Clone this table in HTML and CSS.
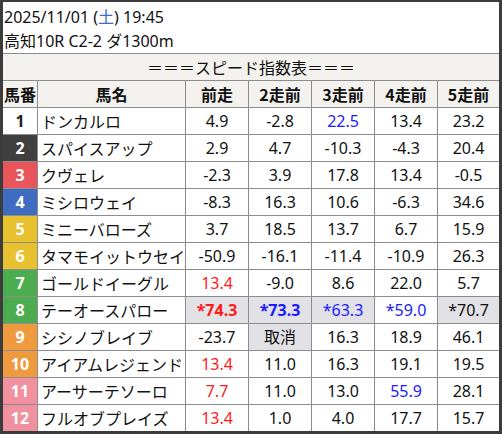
FILE: index.html
```html
<!DOCTYPE html>
<html lang="ja">
<head>
<meta charset="utf-8">
<link rel="stylesheet" href="styles.css">
</head>
<body>
<div class="frame">
  <div class="info">
    <div>2025/11/01 (<span class="sat">土</span>) 19:45</div>
    <div>高知10R C2-2 ダ1300m</div>
  </div>
  <div class="title">＝＝＝スピード指数表＝＝＝</div>
  <table class="grid">
    <colgroup>
      <col class="c-no"><col class="c-name"><col class="c-v"><col class="c-v"><col class="c-v"><col class="c-v"><col class="c-v5">
    </colgroup>
    <thead>
      <tr><th>馬番</th><th>馬名</th><th>前走</th><th>2走前</th><th>3走前</th><th>4走前</th><th>5走前</th></tr>
    </thead>
    <tbody>
      <tr><td class="no w1">1</td><td class="name">ドンカルロ</td><td>4.9</td><td>-2.8</td><td class="blue">22.5</td><td>13.4</td><td>23.2</td></tr>
      <tr><td class="no w2">2</td><td class="name">スパイスアップ</td><td>2.9</td><td>4.7</td><td>-10.3</td><td>-4.3</td><td>20.4</td></tr>
      <tr><td class="no w3">3</td><td class="name">クヴェレ</td><td>-2.3</td><td>3.9</td><td>17.8</td><td>13.4</td><td>-0.5</td></tr>
      <tr><td class="no w4">4</td><td class="name">ミシロウェイ</td><td>-8.3</td><td>16.3</td><td>10.6</td><td>-6.3</td><td>34.6</td></tr>
      <tr><td class="no w5">5</td><td class="name">ミニーバローズ</td><td>3.7</td><td>18.5</td><td>13.7</td><td>6.7</td><td>15.9</td></tr>
      <tr><td class="no w5">6</td><td class="name">タマモイットウセイ</td><td>-50.9</td><td>-16.1</td><td>-11.4</td><td>-10.9</td><td>26.3</td></tr>
      <tr><td class="no w7">7</td><td class="name">ゴールドイーグル</td><td class="red">13.4</td><td>-9.0</td><td>8.6</td><td>22.0</td><td>5.7</td></tr>
      <tr><td class="no w7">8</td><td class="name">テーオースパロー</td><td class="hl red b">*74.3</td><td class="hl blue b">*73.3</td><td class="hl blue">*63.3</td><td class="blue">*59.0</td><td class="hl">*70.7</td></tr>
      <tr><td class="no w9">9</td><td class="name">シシノブレイブ</td><td>-23.7</td><td class="hl">取消</td><td>16.3</td><td>18.9</td><td>46.1</td></tr>
      <tr><td class="no w9">10</td><td class="name">アイアムレジェンド</td><td class="red">13.4</td><td>11.0</td><td>16.3</td><td>19.1</td><td>19.5</td></tr>
      <tr><td class="no w11">11</td><td class="name">アーサーテソーロ</td><td class="red">7.7</td><td>11.0</td><td>13.0</td><td class="blue">55.9</td><td>28.1</td></tr>
      <tr><td class="no w11">12</td><td class="name">フルオブプレイズ</td><td class="red">13.4</td><td>1.0</td><td>4.0</td><td>17.7</td><td>15.7</td></tr>
    </tbody>
  </table>
</div>
</body>
</html>
```
FILE: styles.css
```css
* { box-sizing: border-box; }
html, body { margin: 0; padding: 0; background: #fff; }
body {
  font-family: "Noto Sans", "Noto Sans CJK JP", sans-serif;
  font-size: 16px;
  color: #111;
}
.frame {
  width: 502px;
  height: 434px;
  border-style: solid;
  border-color: #3c3c3c;
  border-width: 2px 3px 3px 3px;
  overflow: hidden;
  background: #fff;
}
.info {
  padding: 3px 0 0 1px;
  height: 51px;
  line-height: 24px;
}
.sat { color: #3a6cc8; }
.title {
  height: 27px;
  line-height: 26px;
  border-top: 1px solid #8c8c8c;
  background: #f3f2ee;
  text-align: center;
  font-family: "Noto Sans CJK JP", sans-serif;
}
.grid {
  border-collapse: collapse;
  width: 497px;
  table-layout: fixed;
  margin-left: -1px;
}
.c-no { width: 35px; }
.c-name { width: 148px; }
.c-v { width: 63px; }
.c-v5 { width: 62px; }
.grid th, .grid td {
  border: 1px solid #8c8c8c;
  height: 27px;
  padding: 0;
  text-align: center;
  white-space: nowrap;
  line-height: 24px;
}
.grid th {
  background: #f3f2ee;
  font-weight: bold;
  font-family: "Noto Sans CJK JP", sans-serif;
}
.grid td.name {
  text-align: left;
  padding-left: 3px;
  font-family: "Noto Sans CJK JP", sans-serif;
  overflow: hidden;
}
.grid td.no { font-weight: bold; color: #fff; }
.w1 { background: #fff; color: #222 !important; }
.w2 { background: #404040; }
.w3 { background: #e8555b; }
.w4 { background: #3f6cc0; }
.w5 { background: #e7c22e; }
.w7 { background: #4bad4f; }
.w9 { background: #ef9a3e; }
.w11 { background: #f1909f; }
.red { color: #ff1a1a; }
.blue { color: #1a1aff; }
.b { font-weight: bold; }
.hl { background: #e1e1e6; }
```
